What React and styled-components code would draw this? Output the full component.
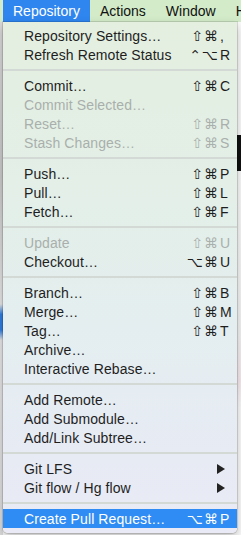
import React from 'react'
import styled, { createGlobalStyle } from 'styled-components'

const GlobalStyle = createGlobalStyle`
  html, body {
    margin: 0;
    padding: 0;
    background: #f4f4f4;
    font-family: "Liberation Sans", "DejaVu Sans", sans-serif;
    -webkit-font-smoothing: antialiased;
  }
`

const Screen = styled.div`
  width: 241px;
  height: 535px;
  overflow: hidden;
  display: flex;
  flex-direction: column;
`

const MenuBar = styled.nav`
  height: 22px;
  flex: none;
  display: flex;
  padding-left: 3px;
  background: #d3ebc8;
  font-size: 14px;
  color: #111;
`

const BarItem = styled.div`
  display: flex;
  align-items: center;
  padding: 0 10px;
  white-space: nowrap;
  background: ${p => (p.open ? '#2f86ef' : 'transparent')};
  color: ${p => (p.open ? '#fff' : '#111')};
`

const Desk = styled.div`
  position: relative;
  flex: 1;
  display: flex;
`

const Backdrop = styled.div`
  flex: 1;
  display: grid;
  grid-template-columns: 3px 1fr;
  background: #fdfdfd;
`

const Gutter = styled.div`
  background: linear-gradient(180deg, #d9d9d9 0%, #c9c9c9 30%, #e5e5e5 55%, #2f7de0 57%, #2f7de0 60%, #e5e5e5 62%, #dcdcdc 100%);
`

const WindowArea = styled.div`
  background: linear-gradient(180deg, #fafafa 0%, #fafafa 22%, #111 22%, #111 29%, #fafafa 29%, #f3f3f3 60%, #f7e9ee 70%, #fafafa 75%, #fafafa 100%);
`

const Menu = styled.div`
  position: absolute;
  top: 0;
  left: 3px;
  width: 234px;
  padding: 4px 0 5px;
  background: linear-gradient(180deg, #e4efe0 0%, #e3efe8 35%, #e4eef0 60%, #e7ebf4 85%, #e9eaf5 100%);
  border-radius: 0 0 5px 5px;
  box-shadow: 0 0 0 1px rgba(0, 0, 0, 0.12), 0 4px 10px rgba(0, 0, 0, 0.25);
  font-size: 14px;
`

const Row = styled.div`
  height: 19px;
  display: flex;
  align-items: center;
  padding-left: 21px;
  white-space: nowrap;
  color: ${p => (p.active ? '#fff' : p.disabled ? '#a9afac' : '#1e1e1e')};
  background: ${p => (p.active ? '#2f8cf5' : 'transparent')};
`

const Label = styled.span`
  flex: 1;
  letter-spacing: 0.1px;
`

const Mods = styled.span`
  text-align: right;
  letter-spacing: 1px;
  font-family: "DejaVu Sans", sans-serif;
  font-size: 14px;
`

const Key = styled.span`
  width: 18px;
  padding-left: 1px;
  box-sizing: border-box;
`

const Arrow = styled.svg`
  width: 8px;
  height: 10px;
  margin-right: 12px;
`

const Separator = styled.div`
  height: 12px;
  display: flex;
  align-items: center;

  &::after {
    content: '';
    flex: 1;
    height: 2px;
    background: #d3dad6;
  }
`

const groups = [
  [
    { label: 'Repository Settings…', mods: '⇧⌘', key: ',' },
    { label: 'Refresh Remote Status', mods: '⌃⌥', key: 'R' },
  ],
  [
    { label: 'Commit…', mods: '⇧⌘', key: 'C' },
    { label: 'Commit Selected…', disabled: true },
    { label: 'Reset…', mods: '⇧⌘', key: 'R', disabled: true },
    { label: 'Stash Changes…', mods: '⇧⌘', key: 'S', disabled: true },
  ],
  [
    { label: 'Push…', mods: '⇧⌘', key: 'P' },
    { label: 'Pull…', mods: '⇧⌘', key: 'L' },
    { label: 'Fetch…', mods: '⇧⌘', key: 'F' },
  ],
  [
    { label: 'Update', mods: '⇧⌘', key: 'U', disabled: true },
    { label: 'Checkout…', mods: '⌥⌘', key: 'U' },
  ],
  [
    { label: 'Branch…', mods: '⇧⌘', key: 'B' },
    { label: 'Merge…', mods: '⇧⌘', key: 'M' },
    { label: 'Tag…', mods: '⇧⌘', key: 'T' },
    { label: 'Archive…' },
    { label: 'Interactive Rebase…' },
  ],
  [
    { label: 'Add Remote…' },
    { label: 'Add Submodule…' },
    { label: 'Add/Link Subtree…' },
  ],
  [
    { label: 'Git LFS', submenu: true },
    { label: 'Git flow / Hg flow', submenu: true },
  ],
  [
    { label: 'Create Pull Request…', mods: '⌥⌘', key: 'P', active: true },
  ],
]

const MenuRow = ({ item }) => (
  <Row disabled={item.disabled} active={item.active}>
    <Label>{item.label}</Label>
    {item.submenu ? (
      <Arrow viewBox="0 0 8 10">
        <polygon points="0,0 8,5 0,10" fill="#222" />
      </Arrow>
    ) : item.key ? (
      <>
        <Mods>{item.mods}</Mods>
        <Key>{item.key}</Key>
      </>
    ) : null}
  </Row>
)

const App = () => {
  return (
    <Screen>
      <GlobalStyle />
      <MenuBar>
        <BarItem open>Repository</BarItem>
        <BarItem>Actions</BarItem>
        <BarItem>Window</BarItem>
        <BarItem>Help</BarItem>
      </MenuBar>
      <Desk>
        <Backdrop>
          <Gutter />
          <WindowArea />
        </Backdrop>
        <Menu>
          {groups.map((group, i) => (
            <React.Fragment key={i}>
              {i > 0 && <Separator />}
              {group.map(item => (
                <MenuRow key={item.label} item={item} />
              ))}
            </React.Fragment>
          ))}
        </Menu>
      </Desk>
    </Screen>
  )
}

export default App
